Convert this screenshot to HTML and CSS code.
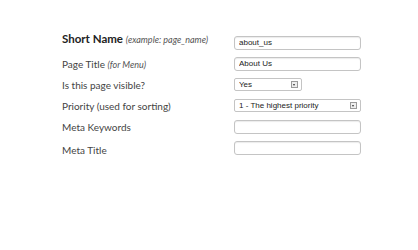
FILE: index.html
```html
<!DOCTYPE html>
<html lang="en">
<head>
  <meta charset="UTF-8">
  <title>Edit Page</title>
  <link rel="stylesheet" href="styles.css">
</head>
<body>

<form class="page-form">
  <div class="row">
    <label class="name-label" for="short-name">Short Name <em>(example: page_name)</em></label>
    <input id="short-name" class="field" type="text" value="about_us">
  </div>
  <div class="row">
    <label for="page-title">Page Title <em>(for Menu)</em></label>
    <input id="page-title" class="field" type="text" value="About Us">
  </div>
  <div class="row">
    <label for="visible">Is this page visible?</label>
    <span class="select-wrap small">
      <select id="visible" class="field">
        <option>Yes</option>
        <option>No</option>
      </select>
      <span class="arrow"></span>
    </span>
  </div>
  <div class="row">
    <label for="priority">Priority (used for sorting)</label>
    <span class="select-wrap">
      <select id="priority" class="field">
        <option>1 - The highest priority</option>
      </select>
      <span class="arrow"></span>
    </span>
  </div>
  <div class="row">
    <label for="keywords">Meta Keywords</label>
    <input id="keywords" class="field" type="text">
  </div>
  <div class="row">
    <label class="last-label" for="meta-title">Meta Title</label>
    <input id="meta-title" class="field" type="text">
  </div>
</form>

</body>
</html>
```

FILE: styles.css
```css
* {
  box-sizing: border-box;
  margin: 0;
  padding: 0;
}

body {
  background: #fff;
  font-family: 'Lato', 'Open Sans', sans-serif;
  color: #444;
}

.page-form {
  padding: 32px 0 0 62px;
}

.row {
  display: flex;
  align-items: center;
  height: 21px;
}

.row label {
  width: 172px;
  font-size: 10px;
}

.row label em {
  font-size: 9px;
  color: #555;
}

.name-label {
  font-weight: bold;
  font-size: 11.5px !important;
  color: #222;
  margin-bottom: 9px;
}

.name-label em {
  font-weight: normal;
  font-size: 9.5px;
}

.last-label {
  margin-top: 5px;
}

.field {
  width: 127px;
  height: 14px;
  border: 1px solid #c4c4c4;
  border-radius: 3px;
  background: #fff;
  box-shadow: inset 0 1px 1px rgba(0,0,0,0.08);
  font-family: 'Liberation Sans', Arial, sans-serif;
  font-size: 8px;
  color: #222;
  padding: 0 4px;
  outline: none;
}

.select-wrap {
  position: relative;
  display: inline-block;
}

.select-wrap select {
  appearance: none;
  -webkit-appearance: none;
  display: block;
  height: 13px;
  border-radius: 2px;
  box-shadow: none;
}

.select-wrap.small select {
  width: 68px;
}

.arrow {
  position: absolute;
  right: 4px;
  top: 3px;
  width: 7px;
  height: 7px;
  border: 1px solid #9a9a9a;
  background: #eee;
}

.arrow::after {
  content: '';
  position: absolute;
  left: 1px;
  top: 2px;
  border-left: 1.5px solid transparent;
  border-right: 1.5px solid transparent;
  border-top: 2px solid #333;
}
```
